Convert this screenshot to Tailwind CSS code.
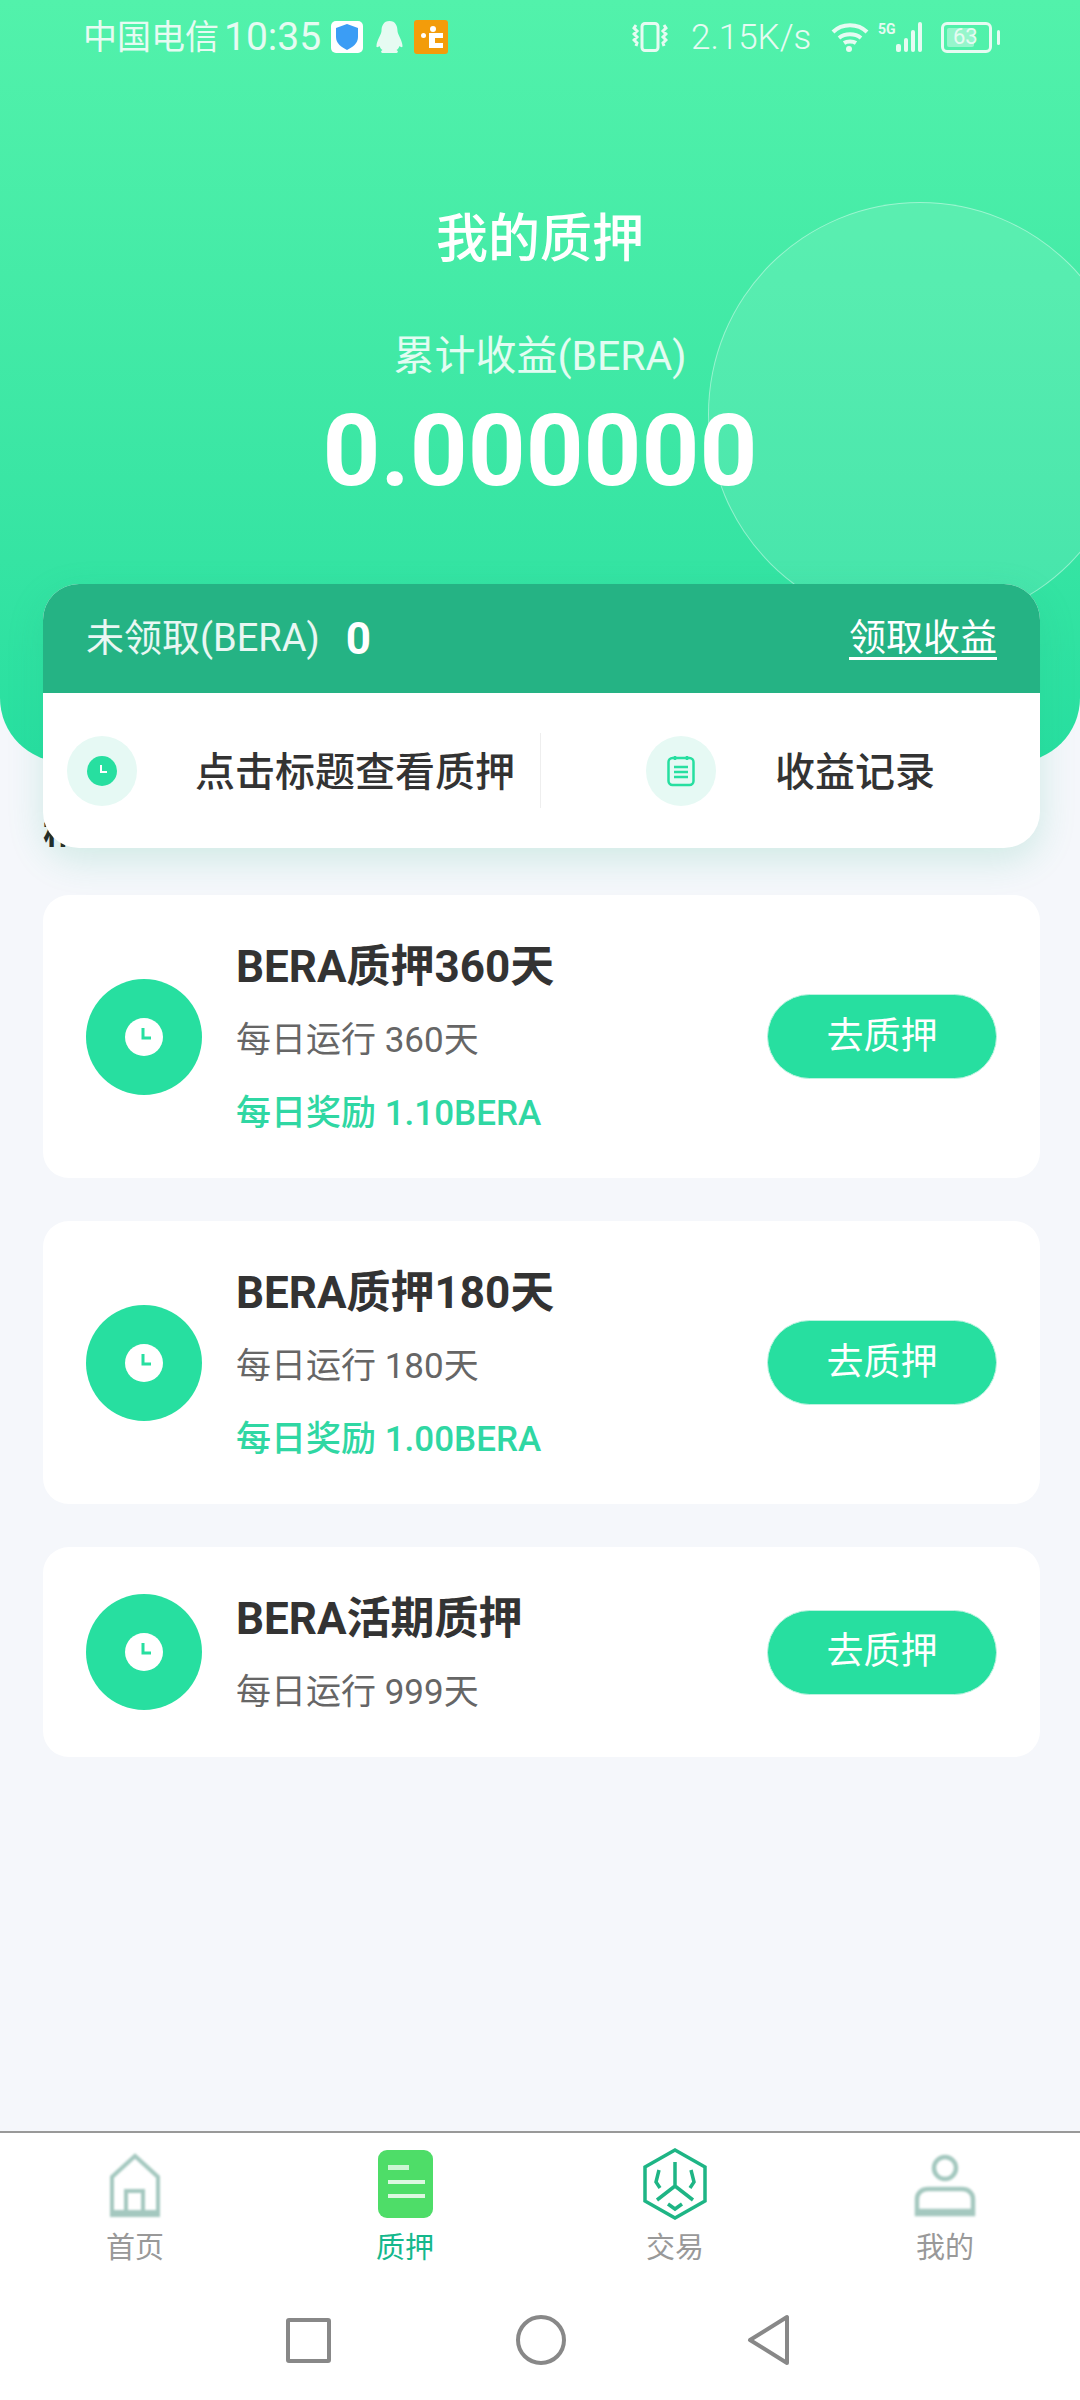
<!DOCTYPE html>
<html lang="zh-CN">
<head>
    <meta charset="UTF-8">
    <meta name="viewport" content="width=device-width, initial-scale=1.0">
    <title>我的质押</title>
    <script src="https://cdn.jsdelivr.net/npm/@tailwindcss/browser@4"></script>
</head>
<body class="bg-[#f5f7fb]">
<div class="w-[1080px] h-[2400px] flex flex-col bg-[#f5f7fb] overflow-hidden font-['Roboto','Noto_Sans_CJK_SC',sans-serif]">

    <!-- 顶部绿色区域 -->
    <div class="relative h-[762px] shrink-0 rounded-b-[64px] overflow-hidden bg-gradient-to-b from-[#52f2ab] to-[#27dfa0]">
        <div class="absolute left-[708px] top-[202px] w-[424px] h-[424px] rounded-full bg-white/10 border border-white/40"></div>

        <!-- 状态栏 -->
        <div class="relative h-[74px] pl-[83px] flex items-center text-[#e6fbf2]">
            <span class="text-[34px] w-[141px] leading-none">中国电信</span>
            <span class="text-[39px] w-[107px] leading-none">10:35</span>
            <div class="w-[32px] h-[32px] rounded-[5px] bg-white flex items-center justify-center">
                <svg width="26" height="28" viewBox="0 0 26 28"><path d="M13 1l11 4v9c0 6-5 10-11 13C7 24 2 20 2 14V5z" fill="#3b9df5"/></svg>
            </div>
            <svg class="ml-[12px]" width="29" height="32" viewBox="0 0 29 32"><path d="M14.500 0c6 0 8 5 8 10 0 3 5 10 5 15 0 2-2 1-3 0-1 3-3 4-3 4 2 1 2 3-1 3h-12c-3 0-3-2-1-3 0 0-2-1-3-4-1 1-3 2-3 0 0-5 5-12 5-15 0-5 2-10 8-10z" fill="#e6fbf2"/></svg>
            <div class="ml-[10px] w-[34px] h-[34px] rounded-[3px] bg-[#f39c0a] relative">
                <span class="absolute left-[7px] top-[13px] w-[5px] h-[5px] bg-white rounded-full"></span>
                <span class="absolute left-[16px] top-[6px] w-[6px] h-[6px] bg-white rounded-full"></span>
                <span class="absolute left-[15px] top-[13px] w-[14px] h-[15px] bg-white"></span>
                <span class="absolute left-[21px] top-[18px] w-[8px] h-[5px] bg-[#f39c0a]"></span>
            </div>
            <svg class="ml-[184px]" width="36" height="30" viewBox="0 0 36 30" fill="none" stroke="#e6fbf2" stroke-width="3">
                <rect x="10" y="1.500" width="16" height="27" rx="3"/>
                <path d="M4 3l-2 3 3 3-3 3 3 3-3 3 3 3-1 3M32 3l2 3-3 3 3 3-3 3 3 3-3 3 1 3"/>
            </svg>
            <span class="ml-[23px] text-[35px] font-light leading-none w-[140px]">2.15K/s</span>
            <svg width="38" height="30" viewBox="0 0 38 30" fill="none" stroke="#e6fbf2" stroke-width="4">
                <path d="M2 10c9-9 25-9 34 0M8 16c6-5 16-5 22 0M13 21c3-2 9-2 12 0"/>
                <circle cx="18" cy="27" r="3" fill="#e6fbf2" stroke="none"/>
            </svg>
            <div class="ml-[9px] relative w-[50px] h-[30px]">
                <span class="absolute left-0 top-0 text-[14px] font-bold leading-none">5G</span>
                <div class="absolute left-[18px] bottom-0 flex items-end gap-[3px]">
                    <span class="w-[5px] h-[8px] bg-[#e6fbf2] rounded-[2px]"></span>
                    <span class="w-[4px] h-[14px] bg-[#e6fbf2] rounded-[2px]"></span>
                    <span class="w-[4px] h-[22px] bg-[#e6fbf2] rounded-[2px]"></span>
                    <span class="w-[4px] h-[30px] bg-[#e6fbf2] rounded-[2px]"></span>
                </div>
            </div>
            <div class="ml-[13px] w-[51px] h-[31px] rounded-[6px] border-[3px] border-[#e6fbf2] relative flex items-center">
                <span class="absolute left-[3px] top-[3px] bottom-[3px] w-[27px] bg-white/40 rounded-[2px]"></span>
                <span class="relative pl-[9px] text-[22px] leading-none">63</span>
            </div>
            <span class="ml-[5px] w-[3px] h-[15px] bg-[#e6fbf2] rounded-full"></span>
        </div>

        <!-- 累计收益 -->
        <div class="relative flex flex-col items-center text-white">
            <h1 class="mt-[134px] h-[64px] text-[52px] font-medium leading-[64px]">我的质押</h1>
            <p class="mt-[60px] h-[48px] text-[41px] leading-[48px] text-white/85">累计收益(BERA)</p>
            <p class="mt-[23px] h-[96px] text-[101px] font-bold leading-[96px]">0.000000</p>
        </div>
    </div>

    <div class="relative -mt-[178px] pl-[43px] pr-[40px]">
        <span class="absolute left-[43px] top-[226px] text-[40px] font-bold leading-none text-[#222222]">精选质押</span>

        <!-- 收益卡片 -->
        <div class="relative h-[264px] rounded-[36px] overflow-hidden bg-white shadow-[0_12px_36px_rgba(37,179,132,0.18)]">
            <div class="h-[109px] px-[43px] flex items-center justify-between bg-[#25b384] text-white">
                <div class="flex items-center">
                    <span class="text-[38px] text-white/90">未领取(BERA)</span>
                    <span class="ml-[26px] text-[44px] font-bold">0</span>
                </div>
                <span class="text-[37px] underline underline-offset-[6px]">领取收益</span>
            </div>
            <div class="h-[155px] flex items-center">
                <div class="w-[498px] pl-[24px] flex items-center border-r border-[#eeeeee]">
                    <div class="w-[70px] h-[70px] rounded-full bg-[#e6f9f4] flex items-center justify-center">
                        <svg width="30" height="30" viewBox="0 0 30 30"><circle cx="15" cy="15" r="15" fill="#27dfa0"/><path d="M14 9v7h6" fill="none" stroke="#fff" stroke-width="2"/></svg>
                    </div>
                    <span class="ml-[58px] mt-[5px] text-[40px] font-medium leading-[70px] text-[#333333]">点击标题查看质押</span>
                </div>
                <div class="pl-[105px] flex items-center">
                    <div class="w-[70px] h-[70px] rounded-full bg-[#e6f9f4] flex items-center justify-center">
                        <svg width="28" height="32" viewBox="0 0 28 32" fill="none" stroke="#27dfa0" stroke-width="2.500"><rect x="1.500" y="3" width="25" height="27" rx="4"/><path d="M8 1v4M20 1v4M7 12h14M7 17h14M7 22h14"/></svg>
                    </div>
                    <span class="ml-[59px] mt-[5px] text-[40px] font-medium leading-[70px] text-[#333333]">收益记录</span>
                </div>
            </div>
        </div>

        <!-- 质押列表 -->
        <div class="relative mt-[47px] flex flex-col gap-[43px]">
            <div class="pl-[43px] pr-[43px] pt-[36px] pb-[28px] rounded-[26px] bg-white flex items-center">
                <div class="w-[116px] h-[116px] -mt-[8px] shrink-0 rounded-full bg-[#27dfa0] flex items-center justify-center">
                    <svg width="38" height="38" viewBox="0 0 38 38"><circle cx="19" cy="19" r="19" fill="#fff"/><path d="M18 10v10h8" fill="none" stroke="#27dfa0" stroke-width="3"/></svg>
                </div>
                <div class="ml-[34px] flex-1">
                    <h3 class="text-[44px] font-bold leading-[73px] text-[#333333]">BERA质押360天</h3>
                    <p class="text-[35px] leading-[73px] text-[#666666]">每日运行 360天</p>
                    <p class="text-[35px] font-medium leading-[73px] text-[#2fd7a3]">每日奖励 1.10BERA</p>
                </div>
                <button class="w-[230px] h-[85px] -mt-[8px] rounded-full bg-[#27dfa0] border border-[#bdf3e0] text-[37px] text-white">去质押</button>
            </div>
            <div class="pl-[43px] pr-[43px] pt-[36px] pb-[28px] rounded-[26px] bg-white flex items-center">
                <div class="w-[116px] h-[116px] -mt-[8px] shrink-0 rounded-full bg-[#27dfa0] flex items-center justify-center">
                    <svg width="38" height="38" viewBox="0 0 38 38"><circle cx="19" cy="19" r="19" fill="#fff"/><path d="M18 10v10h8" fill="none" stroke="#27dfa0" stroke-width="3"/></svg>
                </div>
                <div class="ml-[34px] flex-1">
                    <h3 class="text-[44px] font-bold leading-[73px] text-[#333333]">BERA质押180天</h3>
                    <p class="text-[35px] leading-[73px] text-[#666666]">每日运行 180天</p>
                    <p class="text-[35px] font-medium leading-[73px] text-[#2fd7a3]">每日奖励 1.00BERA</p>
                </div>
                <button class="w-[230px] h-[85px] -mt-[8px] rounded-full bg-[#27dfa0] border border-[#bdf3e0] text-[37px] text-white">去质押</button>
            </div>
            <div class="pl-[43px] pr-[43px] pt-[36px] pb-[28px] rounded-[26px] bg-white flex items-center">
                <div class="w-[116px] h-[116px] -mt-[8px] shrink-0 rounded-full bg-[#27dfa0] flex items-center justify-center">
                    <svg width="38" height="38" viewBox="0 0 38 38"><circle cx="19" cy="19" r="19" fill="#fff"/><path d="M18 10v10h8" fill="none" stroke="#27dfa0" stroke-width="3"/></svg>
                </div>
                <div class="ml-[34px] flex-1">
                    <h3 class="text-[44px] font-bold leading-[73px] text-[#333333]">BERA活期质押</h3>
                    <p class="text-[35px] leading-[73px] text-[#666666]">每日运行 999天</p>
                </div>
                <button class="w-[230px] h-[85px] -mt-[8px] rounded-full bg-[#27dfa0] border border-[#bdf3e0] text-[37px] text-white">去质押</button>
            </div>
        </div>
    </div>

    <!-- 底部导航 -->
    <div class="mt-auto h-[269px] shrink-0 bg-white border-t-2 border-[#999999]">
        <div class="h-[140px] pt-[16px] grid grid-cols-4 text-[29px] text-[#999999]">
            <div class="flex flex-col items-center">
                <svg class="blur-[0.8px]" width="54" height="72" viewBox="0 0 54 72" fill="none" stroke="#a4c8bf" stroke-width="4">
                    <path d="M4 66V28L27 7l23 21v38zM18 66V42h17v24"/>
                    <path d="M4 64h46" stroke-width="6"/>
                </svg>
                <span class="mt-[10px] leading-[34px]">首页</span>
            </div>
            <div class="flex flex-col items-center">
                <div class="mt-[1px] w-[55px] h-[68px] rounded-[9px] bg-[#4edd68] blur-[0.7px] pt-[15px] pl-[10px] flex flex-col gap-[10px] mb-[3px]">
                    <span class="w-[21px] h-[5px] bg-white/70"></span>
                    <span class="w-[37px] h-[4px] bg-white/80"></span>
                    <span class="w-[37px] h-[4px] bg-white/80"></span>
                </div>
                <span class="mt-[10px] leading-[34px] text-[#14b88c]">质押</span>
            </div>
            <div class="flex flex-col items-center">
                <svg class="-mt-[1px] -mb-[2px]" width="64" height="72" viewBox="0 0 64 72" fill="none" stroke="#1eb585" stroke-width="3.500">
                    <path d="M32 2l30 17v34L32 70 2 53V19z"/>
                    <path d="M32 14v24M32 38L14 52M32 38l18 14M16 22l-3 12 4 6M48 22l3 12-4 6M25 56l7 5 7-5"/>
                </svg>
                <span class="mt-[13px] leading-[34px]">交易</span>
            </div>
            <div class="flex flex-col items-center">
                <svg class="blur-[0.8px]" width="62" height="72" viewBox="0 0 62 72" fill="none" stroke="#a4c8bf" stroke-width="4.500">
                    <circle cx="31" cy="19" r="11"/>
                    <path d="M3 65V50c0-6 5-10 11-10h34c6 0 11 4 11 10v15zM3 62h56"/>
                </svg>
                <span class="mt-[10px] leading-[34px]">我的</span>
            </div>
        </div>
        <div class="mt-[41px] pl-[286px] flex items-center">
            <span class="w-[45px] h-[45px] rounded-[3px] border-[4px] border-[#888888]"></span>
            <span class="ml-[185px] w-[50px] h-[50px] rounded-full border-[4px] border-[#888888]"></span>
            <svg class="ml-[181px]" width="44" height="52" viewBox="0 0 44 52" fill="none" stroke="#888888" stroke-width="4" stroke-linejoin="round"><path d="M40 3v46L3 26z"/></svg>
        </div>
    </div>
</div>
</body>
</html>
